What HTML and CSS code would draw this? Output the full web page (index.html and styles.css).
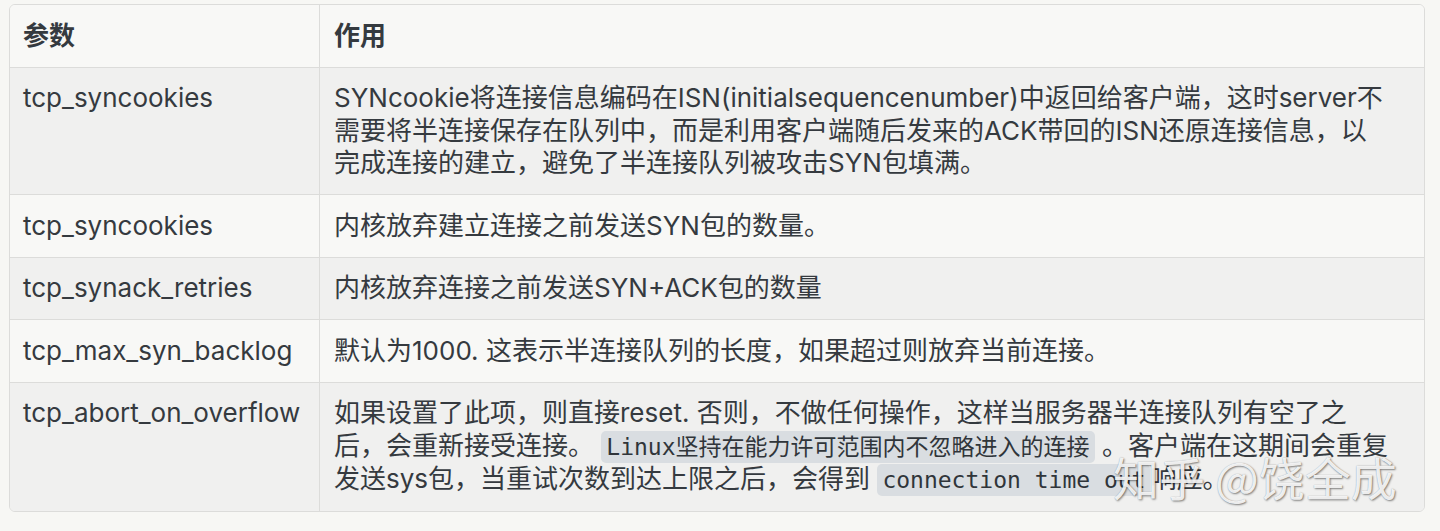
FILE: index.html
```html
<!DOCTYPE html>
<html lang="zh-CN">
<head>
<meta charset="utf-8">
<title>参数</title>
<link rel="stylesheet" href="styles.css">
</head>
<body>
<div class="page">
  <div class="table-wrap">
    <table class="params">
      <thead>
        <tr>
          <th class="col-name">参数</th>
          <th class="col-desc">作用</th>
        </tr>
      </thead>
      <tbody>
        <tr class="odd">
          <td class="col-name">tcp_syncookies</td>
          <td class="col-desc">SYNcookie将连接信息编码在ISN(initialsequencenumber)中返回给客户端，这时server不需要将半连接保存在队列中，而是利用客户端随后发来的ACK带回的ISN还原连接信息，以完成连接的建立，避免了半连接队列被攻击SYN包填满。</td>
        </tr>
        <tr class="even">
          <td class="col-name">tcp_syncookies</td>
          <td class="col-desc">内核放弃建立连接之前发送SYN包的数量。</td>
        </tr>
        <tr class="odd">
          <td class="col-name">tcp_synack_retries</td>
          <td class="col-desc">内核放弃连接之前发送SYN+ACK包的数量</td>
        </tr>
        <tr class="even">
          <td class="col-name">tcp_max_syn_backlog</td>
          <td class="col-desc">默认为1000. 这表示半连接队列的长度，如果超过则放弃当前连接。</td>
        </tr>
        <tr class="odd last">
          <td class="col-name">tcp_abort_on_overflow</td>
          <td class="col-desc">如果设置了此项，则直接reset. 否则，不做任何操作，这样当服务器半连接队列有空了之后，会重新接受连接。 <code class="inline-code">Linux坚持在能力许可范围内不忽略进入的连接</code> 。客户端在这期间会重复发送sys包，当重试次数到达上限之后，会得到 <code class="inline-code">connection time out</code>响应。</td>
        </tr>
      </tbody>
    </table>
  </div>
  <div class="watermark">知乎 @饶全成</div>
</div>
</body>
</html>
```
FILE: styles.css
```css
html, body {
  margin: 0;
  padding: 0;
  background: #f7f7f4;
}

.page {
  position: relative;
  width: 1440px;
  height: 531px;
  padding: 4px 15px 0 9px;
  box-sizing: border-box;
  font-family: "Inter", "Noto Sans CJK SC", sans-serif;
  font-size: 26px;
  line-height: 32.5px;
  color: #353a3f;
}

.table-wrap {
  border: 1px solid #dcdcda;
  border-radius: 6px;
  overflow: hidden;
}

.params {
  width: 100%;
  table-layout: fixed;
  border-collapse: separate;
  border-spacing: 0;
}

.params th,
.params td {
  box-sizing: border-box;
  padding: 14.5px 13px 14.5px 13px;
  text-align: left;
  vertical-align: top;
  border-bottom: 1px solid #dcdcda;
}

.params .col-name {
  width: 310px;
  border-right: 1px solid #dcdcda;
}

.params .col-desc {
  padding-left: 14px;
  padding-right: 33px;
}

.params th {
  font-weight: 700;
  background: #f8f8f6;
}

.params tr.odd td {
  background: #f0f0ef;
}

.params tr.even td {
  background: #f8f8f6;
}

.params tr.last td {
  border-bottom: none;
}

.inline-code {
  font-family: "DejaVu Sans Mono", "Noto Sans CJK SC", monospace;
  font-size: 23px;
  background: #d9dde1;
  color: #30353a;
  border-radius: 5px;
  padding: 3px 5px;
}

.watermark {
  position: absolute;
  left: 1113px;
  top: 448px;
  font-family: "Noto Sans CJK SC", sans-serif;
  font-size: 46px;
  line-height: 56px;
  color: rgba(255, 255, 255, 0.9);
  text-shadow: 1px 1px 2px rgba(0, 0, 0, 0.45), 0 0 1px rgba(0, 0, 0, 0.3);
  white-space: nowrap;
}
```
